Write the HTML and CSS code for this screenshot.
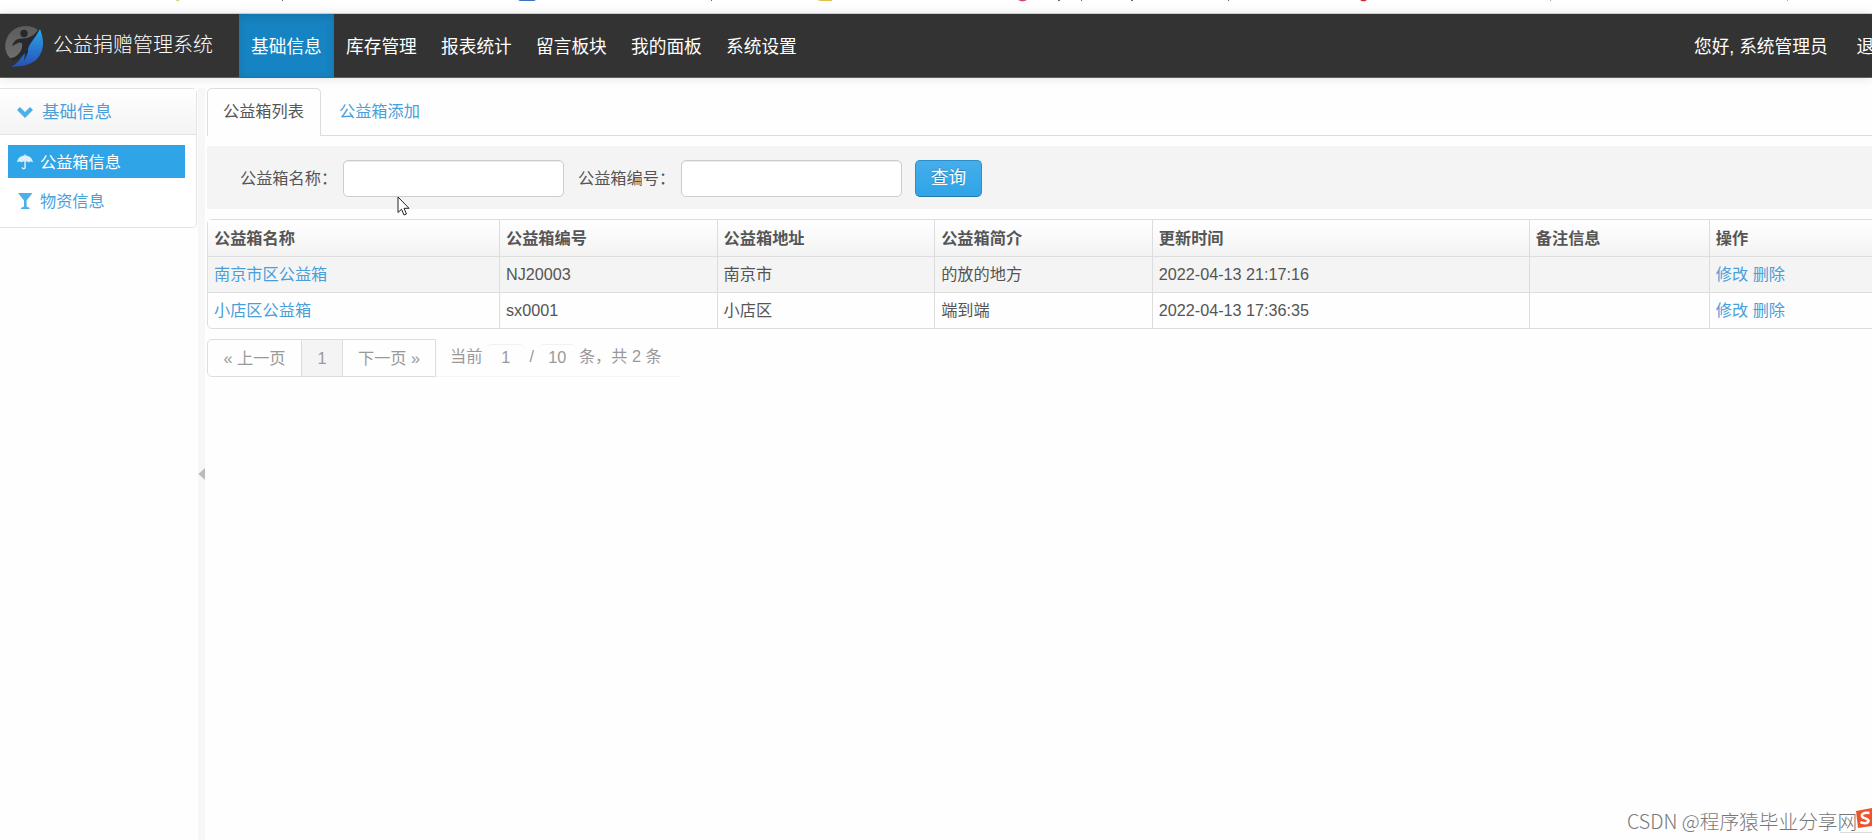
FILE: index.html
```html
<!DOCTYPE html>
<html lang="zh-CN">
<head>
  <meta charset="UTF-8">
  <meta name="viewport" content="width=device-width, initial-scale=1.0">
  <title>公益捐赠管理系统</title>
  <link rel="stylesheet" href="styles.css">
</head>
<body>
  <svg class="topstrip" width="1872" height="13" viewBox="0 0 1872 13">
    <path d="M176 0h4l-3 1.2z" fill="#c8c84a"/>
    <path d="M282 0h1v1h-1zM711 0h1v1h-1zM1058 0h2v1h-2zM1081 0h1v1h-1zM1131 0h2v1h-2zM1228 0h1v1h-1z" fill="#666"/>
    <path d="M518 0h18l-2 1h-14z" fill="#3f6fc0"/>
    <path d="M818 0h14v1h-12z" fill="#e3c04e"/>
    <path d="M1018 0h9l-3 1.2h-3z" fill="#d0456e"/>
    <path d="M1360 0h7l-2 1.2h-3z" fill="#d02a2a"/>
    <path d="M1550 0h1v1h-1zM1787 0h1v1h-1z" fill="#aaa"/>
  </svg>

  <div class="navbar">
    <a class="brand" href="#">
      <svg class="logo" width="40" height="42" viewBox="0 0 40 42">
        <defs>
          <linearGradient id="g1" x1="0" y1="0" x2="0" y2="1">
            <stop offset="0" stop-color="#5c5c5c"/>
            <stop offset="1" stop-color="#6e6e6e"/>
          </linearGradient>
          <linearGradient id="g2" x1="0" y1="0" x2="0" y2="1">
            <stop offset="0" stop-color="#2aa5e8"/>
            <stop offset="1" stop-color="#2850b8"/>
          </linearGradient>
        </defs>
        <path d="M6 32C-1 25 0 13 7 6C14 -1 26 -2 34 4L24 16L18 30Z" fill="url(#g1)"/>
        <path d="M36 3C40 13 41 24 33 33C26 40 17 40 7 41C13 38 17 33 20 27L24 15C28 13 33 8 36 3Z" fill="url(#g2)"/>
        <path d="M36 2C32 8 27 11 23 12L14 13C11 14 9 17 8 20L15 16.500L18 17C19 23 16 29 7 33L9 35C15 33 19 30 21 27L20 35L24 26C23 18 32 13 36 2Z" fill="#262a2e"/>
        <circle cx="20" cy="7.500" r="3.700" fill="#282828"/>
      </svg>
      <span>公益捐赠管理系统</span>
    </a>
    <ul class="menu">
      <li class="active"><a href="#">基础信息</a></li>
      <li><a href="#">库存管理</a></li>
      <li><a href="#">报表统计</a></li>
      <li><a href="#">留言板块</a></li>
      <li><a href="#">我的面板</a></li>
      <li><a href="#">系统设置</a></li>
    </ul>
    <div class="user">
      <a href="#">您好, 系统管理员</a>
      <a href="#">退出</a>
    </div>
  </div>

  <div class="container">
    <div class="sidebar">
      <div class="group">
        <a class="group-title" href="#">
          <svg width="16" height="12" viewBox="0 0 16 12"><path d="M1.500 2.500L8 9L14.500 2.500" fill="none" stroke="#4bb0ea" stroke-width="4.200"/></svg>
          <span>基础信息</span>
        </a>
        <ul class="side-list">
          <li class="active">
            <a href="#">
              <svg width="16" height="16" viewBox="0 0 16 16"><path d="M7.300 1.600V.5h1.400v1.100C12.600 2 15.500 4.500 16 8.600C14.800 7.200 12.900 7.200 11.800 8.600C10.900 7.500 9.800 7.200 8.800 7.600V13.200C8.800 16.200 4.600 16.200 4.600 13.200H6.100C6.100 14.400 7.300 14.400 7.300 13.200V7.600C6.200 7.200 5.100 7.500 4.200 8.600C3.100 7.200 1.200 7.200 0 8.600C.5 4.500 3.400 2 7.300 1.600Z" fill="#d9effb"/></svg>
              <span>公益箱信息</span>
            </a>
          </li>
          <li>
            <a href="#">
              <svg width="16" height="16" viewBox="0 0 16 16"><path d="M1 0H15.500L9.600 7.500V13.500L12.500 15V16H4V15L7 13.500V7.500Z" fill="#4bb0ea"/></svg>
              <span>物资信息</span>
            </a>
          </li>
        </ul>
      </div>
    </div>

    <div class="splitter">
      <svg width="7" height="12" viewBox="0 0 7 12"><path d="M7 0V12L.5 6Z" fill="#bbb"/></svg>
    </div>

    <div class="content">
      <ul class="tabs">
        <li class="active"><a href="#">公益箱列表</a></li>
        <li><a href="#">公益箱添加</a></li>
      </ul>

      <form class="search">
        <label for="name">公益箱名称：</label>
        <input type="text" id="name">
        <label for="code">公益箱编号：</label>
        <input type="text" id="code">
        <button type="button">查询</button>
      </form>

      <table class="list">
        <colgroup>
          <col class="c1"><col class="c2"><col class="c2"><col class="c2"><col class="c3"><col class="c4"><col class="c5">
        </colgroup>
        <thead>
          <tr>
            <th>公益箱名称</th>
            <th>公益箱编号</th>
            <th>公益箱地址</th>
            <th>公益箱简介</th>
            <th>更新时间</th>
            <th>备注信息</th>
            <th>操作</th>
          </tr>
        </thead>
        <tbody>
          <tr class="odd">
            <td><a href="#">南京市区公益箱</a></td>
            <td>NJ20003</td>
            <td>南京市</td>
            <td>的放的地方</td>
            <td>2022-04-13 21:17:16</td>
            <td></td>
            <td><a href="#">修改</a> <a href="#">删除</a></td>
          </tr>
          <tr>
            <td><a href="#">小店区公益箱</a></td>
            <td>sx0001</td>
            <td>小店区</td>
            <td>端到端</td>
            <td>2022-04-13 17:36:35</td>
            <td></td>
            <td><a href="#">修改</a> <a href="#">删除</a></td>
          </tr>
        </tbody>
      </table>

      <div class="pagination">
        <ul>
          <li class="prev">« 上一页</li>
          <li class="current">1</li>
          <li class="next">下一页 »</li>
        </ul>
        <div class="page-info">
          <span>当前</span>
          <span class="num">1</span>
          <span>/</span>
          <span class="num">10</span>
          <span>条，共 2 条</span>
        </div>
      </div>
    </div>
  </div>

  <svg class="cursor" width="14" height="21" viewBox="0 0 14 21"><path d="M1 1V16.500L4.500 13.200L7 19L9.500 18L7 12.300H12Z" fill="#fff" stroke="#222" stroke-width="1"/></svg>

  <svg class="ime" width="32" height="26" viewBox="0 0 32 26">
    <path d="M0 25.500H32" stroke="#ddd"/>
    <path d="M16 4L32 1V19L18 21Z" fill="#f0532a"/>
    <path d="M29.500 6C23 5 20 8 23 10.500C27 12 30 13 28 15C26 17 22 16 20.500 15" fill="none" stroke="#fff" stroke-width="2.500"/>
  </svg>
  <div class="watermark">CSDN @程序猿毕业分享网</div>
</body>
</html>
```
FILE: styles.css
```css
*{
  box-sizing: border-box;
}
body{
  margin: 0;
  height: 840px;
  overflow: hidden;
  position: relative;
  background-color: #fefefe;
  font-family: "Liberation Sans", "Noto Sans CJK SC", sans-serif;
  font-size: 16.2px;
  color: #555;
}
ul{
  list-style: none;
  margin: 0;
  padding: 0;
}
a{
  color: #4a9fdb;
  text-decoration: none;
}
svg{
  display: block;
  flex: none;
}
.navbar{
  display: flex;
  height: 65px;
  background-color: #333;
  border-top: 1px solid #ccc;
  border-bottom: 1px solid #1d74a8;
  box-shadow: 0 1px 10px rgba(0, 0, 0, 0.1);
}
.brand{
  display: flex;
  width: 239px;
  padding: 12px 0 0 4px;
  color: #fff;
  font-size: 20px;
  font-weight: 300;
  line-height: 39px;
}
.brand span{
  margin-left: 9px;
}
.menu{
  display: flex;
}
.menu a, .user a{
  display: block;
  height: 63px;
  padding: 0 12px;
  line-height: 66px;
  font-size: 17.7px;
  color: #fff;
  white-space: nowrap;
}
.menu li{
  width: 95px;
}
.menu .active{
  background-color: #1684c2;
  box-shadow: inset 0 3px 8px rgba(0, 0, 0, 0.125);
}
.user{
  display: flex;
  margin-left: auto;
  margin-right: -20px;
}
.user a{
  padding: 0 0 0 29px;
}
.container{
  display: flex;
  height: 762px;
  padding-top: 10px;
}
.sidebar{
  width: 198px;
  flex: none;
}
.group{
  width: 197px;
  height: 140px;
  border: 1px solid #e3e3e3;
  border-left: none;
  border-radius: 0 5px 5px 0;
  background-color: #fff;
}
.group-title{
  display: flex;
  align-items: center;
  height: 46px;
  padding-left: 17px;
  font-size: 17.5px;
  border-bottom: 1px solid #e3e3e3;
  background-image: linear-gradient(#fff, #f4f4f4);
}
.group-title span{
  margin-left: 9px;
  padding-bottom: 2px;
}
.side-list{
  padding: 10px 11px 0 8px;
}
.side-list li{
  height: 33px;
  margin-bottom: 6px;
}
.side-list a{
  display: flex;
  align-items: center;
  height: 33px;
  padding-left: 9px;
}
.side-list span{
  margin-left: 7px;
  padding-bottom: 2px;
}
.side-list .active{
  background-color: #2fa4e7;
}
.side-list .active a{
  color: #fff;
}
.splitter{
  display: flex;
  align-items: center;
  flex: none;
  width: 7px;
  background-color: #f7f7f7;
}
.splitter svg{
  margin-top: 19px;
}
.content{
  flex: 1;
  min-width: 0;
  padding-left: 2px;
}
.tabs{
  display: flex;
  height: 48px;
  border-bottom: 1px solid #ddd;
}
.tabs li{
  height: 48px;
  padding: 0 15px;
  line-height: 45px;
  border: 1px solid transparent;
}
.tabs .active{
  background-color: #fefefe;
  border-color: #ddd;
  border-bottom: none;
  border-radius: 5px 5px 0 0;
  width: 114px;
  margin-right: 2px;
}
.tabs .active a{
  color: #555;
}
.search{
  display: flex;
  align-items: center;
  height: 63px;
  margin: 10px 0;
  padding: 2px 0 0 33px;
  background-color: #f4f4f4;
}
.search label{
  width: 103px;
  padding-bottom: 4px;
  white-space: nowrap;
}
.search input{
  width: 221px;
  height: 37px;
  margin: 0 14px 0 0;
  border: 1px solid #ccc;
  border-radius: 5px;
  background-color: #fff;
  box-shadow: inset 0 1px 1px rgba(0, 0, 0, 0.075);
}
.search button{
  width: 67px;
  height: 37px;
  margin-left: -1px;
  padding: 0 0 5px;
  border: 1px solid #2a8fca;
  border-bottom-color: #1f78ad;
  border-radius: 5px;
  background-image: linear-gradient(#45aeea, #2fa4e7);
  color: #fff;
  font-family: inherit;
  font-size: 17.7px;
  text-shadow: 0 -1px 0 rgba(0, 0, 0, 0.25);
}
.list{
  table-layout: fixed;
  width: 1700px;
  border: 1px solid #ddd;
  border-radius: 5px;
  border-collapse: separate;
  border-spacing: 0;
}
.c1{ width: 291px; }
.c2{ width: 217.6px; }
.c3{ width: 377px; }
.c4{ width: 180px; }
.list th, .list td{
  height: 36px;
  padding: 0 6px;
  line-height: 35px;
  text-align: left;
  border-left: 1px solid #ddd;
  border-top: 1px solid #ddd;
}
.list th:first-child, .list td:first-child{
  border-left: none;
}
.list th{
  border-top: none;
  background-image: linear-gradient(#fff, #f3f3f3);
}
.list .odd td{
  background-color: #f4f4f4;
}
.pagination{
  display: flex;
  margin-top: 10px;
  color: #999;
}
.pagination ul{
  display: flex;
  height: 38px;
  border: 1px solid #ddd;
  border-radius: 5px 0 0 5px;
  line-height: 37px;
  text-align: center;
  white-space: nowrap;
}
.prev{ width: 93px; }
.current{
  width: 42px;
  border-left: 1px solid #ddd;
  border-right: 1px solid #ddd;
  background-color: #f4f4f4;
}
.next{ width: 92px; }
.page-info{
  display: flex;
  width: 244px;
  height: 38px;
  padding-left: 14px;
  line-height: 34px;
  white-space: nowrap;
  border-bottom: 1px solid #f6f6f6;
}
.page-info .num{
  width: 37px;
  height: 26px;
  margin: 5px 5px 0;
  line-height: 24px;
  text-align: center;
  border-top: 1px solid #f1f1f1;
  border-radius: 5px;
}
.page-info .num + span:last-child{
  margin-left: -2px;
}
.cursor{
  position: absolute;
  left: 397px;
  top: 196px;
}
.watermark{
  position: absolute;
  left: 1627px;
  top: 806px;
  line-height: 30px;
  font-family: "Noto Sans CJK SC", sans-serif;
  font-size: 19.7px;
  font-weight: 300;
  color: #777;
  white-space: nowrap;
}
.ime{
  position: absolute;
  left: 1840px;
  top: 807px;
}
```
